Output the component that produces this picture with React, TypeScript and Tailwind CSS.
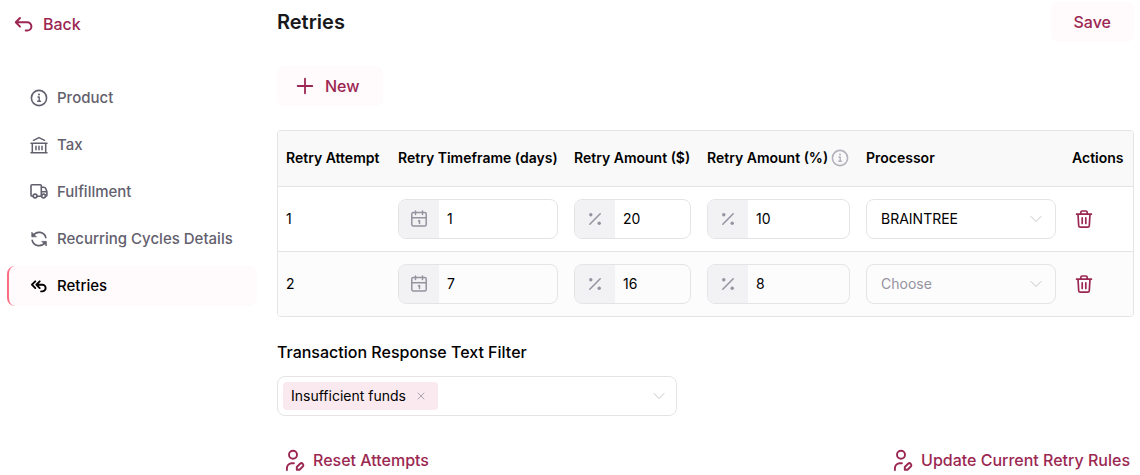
import React, { useState } from 'react';

type IconProps = { className?: string };

const strokeProps = {
  fill: 'none',
  stroke: 'currentColor',
  strokeLinecap: 'round' as const,
  strokeLinejoin: 'round' as const,
  'aria-hidden': true,
};

const BackIcon = ({ className }: IconProps) => (
  <svg viewBox="0 0 20 20" className={className} strokeWidth={2} {...strokeProps}>
    <path d="M6 4 1.8 8.3 6 12.6M2 8.3h11.3a4.1 4.1 0 0 1 0 8.2h-1.6" />
  </svg>
);

const InfoIcon = ({ className }: IconProps) => (
  <svg viewBox="0 0 20 20" className={className} strokeWidth={1.6} {...strokeProps}>
    <circle cx="10" cy="10" r="7.6" />
    <path d="M9 9h1.2v4M8.7 13.2h2.8" strokeWidth={1.4} />
    <circle cx="10" cy="6.6" r="1" fill="currentColor" stroke="none" />
  </svg>
);

const BankIcon = ({ className }: IconProps) => (
  <svg viewBox="0 0 20 20" className={className} strokeWidth={1.5} {...strokeProps}>
    <path d="M4.5 5.3 10 2.6l5.5 2.7M2 8.2h16M3.3 8.2v9.4M16.7 8.2v9.4M2 17.8h16M7 11.3v3.4M10 11.3v3.4M13 11.3v3.4" />
  </svg>
);

const TruckIcon = ({ className }: IconProps) => (
  <svg viewBox="0 0 20 20" className={className} strokeWidth={1.6} {...strokeProps}>
    <path d="M4 14.3H3a1 1 0 0 1-1-1V3.8a1 1 0 0 1 1-1h8.3a1 1 0 0 1 1 1v10.5H8.2M12.3 5.3h2.6a2 2 0 0 1 1.8 1.2l1.2 3.2v3.6a1 1 0 0 1-1 1M12.3 9.7h5.4" />
    <circle cx="6.1" cy="14" r="1.9" />
    <circle cx="14.6" cy="14" r="1.9" />
  </svg>
);

const CyclesIcon = ({ className }: IconProps) => (
  <svg viewBox="0 0 20 20" className={className} strokeWidth={1.7} {...strokeProps}>
    <path d="M4.2 6.4a7 7 0 0 1 12.6 2.2M15.800 13.600a7 7 0 0 1-12.600-2.200" />
    <path d="M2.800 3.600v4.200h4.200zM17.300 16.600v-4.200h-4.200z" fill="currentColor" strokeWidth={0.8} />
  </svg>
);

const ReplyAllIcon = ({ className }: IconProps) => (
  <svg viewBox="0 0 20 20" className={className} strokeWidth={1.9} {...strokeProps}>
    <path d="M6.3 5.3 2.9 8.7l3.4 3.4M10.7 5.3 7.3 8.7l3.4 3.4M7.5 8.7h5.8a3.3 3.3 0 0 1 0 6.7h-1.2" />
  </svg>
);

const CalendarIcon = ({ className }: IconProps) => (
  <svg viewBox="0 0 20 20" className={className} strokeWidth={1.5} {...strokeProps}>
    <rect x="2.800" y="3.500" width="14.400" height="13.500" rx="1.500" />
    <path d="M2.800 8.700h14.400M6.500 1.900v3.600M13.500 1.900v3.600M9.500 12l1-.5v3" />
  </svg>
);

const PercentIcon = ({ className }: IconProps) => (
  <svg viewBox="0 0 20 20" className={className} strokeWidth={1.5} {...strokeProps}>
    <path d="M4.8 15.2 15.2 4.8" />
    <circle cx="5.8" cy="5.8" r="1.7" fill="currentColor" stroke="none" />
    <circle cx="14.2" cy="14.2" r="1.7" fill="currentColor" stroke="none" />
  </svg>
);

const TrashIcon = ({ className }: IconProps) => (
  <svg viewBox="0 0 20 20" className={className} strokeWidth={1.7} {...strokeProps}>
    <path d="M2.600 5.200h14.800M6.800 5.200V3.400A1.400 1.400 0 0 1 8.200 2h3.600a1.400 1.400 0 0 1 1.400 1.400v1.800M4 5.200l.7 11.500a1.500 1.500 0 0 0 1.500 1.400h7.600a1.500 1.500 0 0 0 1.500-1.400L16 5.200M8.200 8.800v5.600M11.800 8.800v5.600" />
  </svg>
);

const ChevronIcon = ({ className }: IconProps) => (
  <svg viewBox="0 0 12 12" className={className} strokeWidth={1} {...strokeProps}>
    <path d="m1 3.500 5 5 5-5" />
  </svg>
);

const PlusIcon = ({ className }: IconProps) => (
  <svg viewBox="0 0 20 20" className={className} strokeWidth={1.8} {...strokeProps}>
    <path d="M10 2.700v14.600M2.700 10h14.600" />
  </svg>
);

const UserEditIcon = ({ className }: IconProps) => (
  <svg viewBox="0 0 24 24" className={className} strokeWidth={1.9} {...strokeProps}>
    <circle cx="12" cy="6.800" r="4" />
    <path d="M5.900 22v-1.800a5 5 0 0 1 5-5h2" />
    <path d="M15.800 21.700v-2.700l3.300-3.200a1.900 1.900 0 0 1 2.700 2.700l-3.300 3.200z" />
  </svg>
);

const navItems = [
  { label: 'Product', Icon: InfoIcon },
  { label: 'Tax', Icon: BankIcon },
  { label: 'Fulfillment', Icon: TruckIcon },
  { label: 'Recurring Cycles Details', Icon: CyclesIcon },
  { label: 'Retries', Icon: ReplyAllIcon, active: true },
];

const retries = [
  { attempt: 1, days: '1', amount: '20', percent: '10', processor: 'BRAINTREE' },
  { attempt: 2, days: '7', amount: '16', percent: '8', processor: '' },
];

const Sidebar = () => (
  <aside className="w-[257px] shrink-0 pl-[7px] pt-3">
    <a href="#" className="ml-[7px] flex h-6 w-fit items-center gap-[9px] text-base font-medium text-[#9b2752]">
      <BackIcon className="size-5" />
      Back
    </a>
    <nav className="mt-[42px] flex flex-col gap-[7px]">
      {navItems.map(({ label, Icon, active }) => (
        <a
          key={label}
          href="#"
          aria-current={active ? 'page' : undefined}
          className={
            active
              ? 'flex h-10 items-center gap-2 rounded-lg border-l-2 border-[#fb6f85] bg-[#fffafb] pl-5 text-[15px] font-medium text-black'
              : 'flex h-10 items-center gap-2 border-l-2 border-transparent pl-5 text-[15px] font-medium text-[#63606e]'
          }
        >
          <Icon className="size-5" />
          {label}
        </a>
      ))}
    </nav>
  </aside>
);

type NumberFieldProps = { label: string; defaultValue: string; icon: React.ReactNode };

const NumberField = ({ label, defaultValue, icon }: NumberFieldProps) => (
  <label className="flex h-10 overflow-hidden rounded-lg border border-[#e4e4e7]">
    <span className="flex w-10 shrink-0 items-center justify-center bg-[#f2f2f5] text-[#96929f]">{icon}</span>
    <input
      type="text"
      inputMode="numeric"
      aria-label={label}
      defaultValue={defaultValue}
      className="w-full min-w-0 bg-transparent px-2 text-sm text-black outline-none"
    />
  </label>
);

const ProcessorSelect = ({ label, defaultValue }: { label: string; defaultValue: string }) => {
  const [value, setValue] = useState(defaultValue);
  return (
    <div className="relative">
      <select
        aria-label={label}
        value={value}
        onChange={(e) => setValue(e.target.value)}
        className={`block h-10 w-full appearance-none rounded-lg border border-[#e4e4e7] bg-transparent px-3.5 text-sm outline-none ${
          value ? 'text-black' : 'text-[#96929f]'
        }`}
      >
        <option value="">Choose</option>
        <option value="BRAINTREE">BRAINTREE</option>
      </select>
      <ChevronIcon className="pointer-events-none absolute top-3.5 right-3.5 size-3 text-[#c4c4c8]" />
    </div>
  );
};

const RetryTable = () => (
  <div className="mt-6 overflow-hidden rounded border border-[#e4e4e7]">
    <table className="w-full table-fixed text-left text-sm text-black">
      <colgroup>
        <col className="w-[112px]" />
        <col className="w-[176px]" />
        <col className="w-[133px]" />
        <col className="w-[159px]" />
        <col />
        <col className="w-[69px]" />
      </colgroup>
      <thead>
        <tr className="h-[55px] border-b border-[#e4e4e7] bg-[#f9f9f9] whitespace-nowrap">
          <th className="px-2 font-semibold">Retry Attempt</th>
          <th className="px-2 font-semibold">Retry Timeframe (days)</th>
          <th className="px-2 font-semibold">Retry Amount ($)</th>
          <th className="px-2 font-semibold">
            <span className="flex items-center gap-0.5">
              Retry Amount (%)
              <InfoIcon className="size-5 shrink-0 text-[#b5b2bc]" />
            </span>
          </th>
          <th className="px-2 font-semibold">Processor</th>
          <th className="px-2 font-semibold">Actions</th>
        </tr>
      </thead>
      <tbody>
        {retries.map((row) => (
          <tr key={row.attempt} className="border-b border-[#e4e4e7] last:border-b-0 even:bg-[#fcfcfc]">
            <td className="px-2 py-3">{row.attempt}</td>
            <td className="px-2 py-3">
              <NumberField label="Retry Timeframe (days)" defaultValue={row.days} icon={<CalendarIcon className="size-5" />} />
            </td>
            <td className="px-2 py-3">
              <NumberField label="Retry Amount ($)" defaultValue={row.amount} icon={<PercentIcon className="size-5" />} />
            </td>
            <td className="px-2 py-3">
              <NumberField label="Retry Amount (%)" defaultValue={row.percent} icon={<PercentIcon className="size-5" />} />
            </td>
            <td className="px-2 py-3">
              <ProcessorSelect label="Processor" defaultValue={row.processor} />
            </td>
            <td className="px-2 py-3">
              <button type="button" aria-label="Delete retry" className="ml-0.5 flex text-[#9b2752]">
                <TrashIcon className="size-5" />
              </button>
            </td>
          </tr>
        ))}
      </tbody>
    </table>
  </div>
);

const ResponseFilter = () => (
  <div className="mt-[23px]">
    <label htmlFor="response-filter" className="block text-base font-medium text-black">
      Transaction Response Text Filter
    </label>
    <div className="mt-3 flex h-10 max-w-[400px] items-center rounded-lg border border-[#e4e4e7] pr-[11px] pl-[5px]">
      <span className="flex h-7 shrink-0 items-center gap-2.5 rounded-sm bg-[#faeaef] pr-3 pl-2 text-sm text-black">
        Insufficient funds
        <button type="button" aria-label="Remove Insufficient funds" className="text-[#aaa5ad]">
          <svg viewBox="0 0 10 10" className="size-2.5" strokeWidth={1} {...strokeProps}>
            <path d="m2 2 6 6M8 2 2 8" />
          </svg>
        </button>
      </span>
      <input id="response-filter" type="text" className="min-w-0 flex-1 bg-transparent px-2 text-sm outline-none" />
      <ChevronIcon className="size-3 shrink-0 text-[#c4c4c8]" />
    </div>
  </div>
);

export default function App() {
  return (
    <div className="flex bg-white font-['Inter',sans-serif]">
      <Sidebar />
      <main className="ml-5 min-w-0 flex-1 pt-0.5 pr-1.5">
        <div className="flex h-10 items-center justify-between">
          <h1 className="text-xl font-semibold text-[#18181b]">Retries</h1>
          <button type="button" className="h-10 rounded-lg bg-[#fffafb] px-[23px] text-base font-medium text-[#9b2752]">
            Save
          </button>
        </div>
        <button
          type="button"
          className="mt-6 flex h-10 items-center gap-2.5 rounded-lg bg-[#fffafb] pr-[23px] pl-[18px] text-base font-medium text-[#9b2752]"
        >
          <PlusIcon className="size-5" />
          New
        </button>
        <RetryTable />
        <ResponseFilter />
        <div className="mt-8 flex justify-between px-1 text-base font-medium text-[#9b2752]">
          <button type="button" className="flex items-center gap-2">
            <UserEditIcon className="size-6" />
            Reset Attempts
          </button>
          <button type="button" className="flex items-center gap-2">
            <UserEditIcon className="size-6" />
            Update Current Retry Rules
          </button>
        </div>
      </main>
    </div>
  );
}
